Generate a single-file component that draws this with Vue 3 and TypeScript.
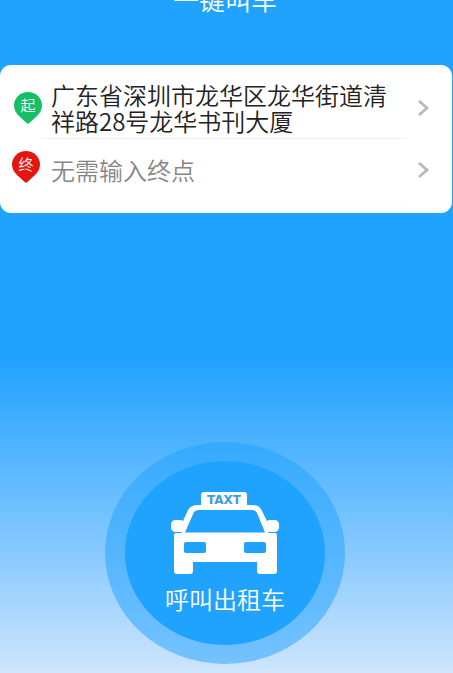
<script setup lang="ts">
interface Stop {
  id: string
  badge: string
  color: string
  text: string
}

const title = '一键叫车'
const stops: Stop[] = [
  { id: 'origin', badge: '起', color: '#14bf66', text: '广东省深圳市龙华区龙华街道清祥路28号龙华书刊大厦' },
  { id: 'destination', badge: '终', color: '#e5150f', text: '无需输入终点' },
]
</script>

<template>
  <main class="page">
    <header class="header">
      <h1 class="title">{{ title }}</h1>
    </header>

    <section class="card">
      <button v-for="stop in stops" :key="stop.id" type="button" class="stop" :class="stop.id">
        <svg class="pin" viewBox="0 0 28 32" aria-hidden="true">
          <path
            d="M14 0C6.2 0 0 6 0 13.5C0 18 2 21 5 24L12.6 31Q14 32.2 15.4 31L23 24C26 21 28 18 28 13.5C28 6 21.8 0 14 0Z"
            :fill="stop.color"
          />
          <text class="pin-text" x="14" y="19" text-anchor="middle">{{ stop.badge }}</text>
        </svg>
        <span class="stop-text">{{ stop.text }}</span>
        <svg class="chevron" viewBox="0 0 12 18" aria-hidden="true">
          <path d="M1 2L9 9L1 16" fill="none" stroke="#b9b9b9" stroke-width="2.800" />
        </svg>
      </button>
    </section>

    <div class="call-area">
      <button type="button" class="call">
        <span class="call-disc">
          <svg class="taxi" viewBox="0 0 110 84" aria-hidden="true">
            <path
              fill="#fff"
              fill-rule="evenodd"
              d="M34 0H74Q77 0 77 3V13H82Q89 13 91.500 18L97 29L99 28H104Q109 28 109 33V35Q109 40 104 40H98L98.500 41H105Q107 41 107 43V79Q107 82 104 82H90Q87 82 87 79V70H23V79Q23 82 20 82H7Q4 82 4 79V43Q4 41 6 41H11.500L12 40H6Q1 40 1 35V33Q1 28 6 28H11L13 29L18 18Q21 13 28 13H31V3Q31 0 34 0ZM29 18Q25 18 23.500 21L15 40.500H95L87 21Q85.500 18 82 18ZM16 50Q14 50 14 52V59Q14 61 16 61H34Q36 61 36 59V52Q36 50 34 50ZM76 50Q74 50 74 52V59Q74 61 76 61H94Q96 61 96 59V52Q96 50 94 50Z"
            />
            <text class="sign" x="54" y="12" text-anchor="middle">TAXT</text>
          </svg>
          <span class="call-label">呼叫出租车</span>
        </span>
      </button>
    </div>
  </main>
</template>

<style>
body {
  margin: 0;
}
</style>

<style scoped>
.page {
  display: flex;
  flex-direction: column;
  box-sizing: border-box;
  min-height: 100vh;
  padding-bottom: 9px;
  overflow: hidden;
  background: linear-gradient(#20a2ff 53%, #43afff 63%, #84c8ff 81%, #cfe5fd 100%);
  font-family: "Noto Sans CJK SC", sans-serif;
}

.header {
  height: 65px;
  overflow: hidden;
}

.title {
  margin: -14px 3px 0 0;
  color: #fff;
  font-size: 26px;
  font-weight: 350;
  line-height: 26px;
  text-align: center;
}

.card {
  margin-right: 1px;
  padding-bottom: 11px;
  border-radius: 11px;
  background: #fff;
}

.stop {
  position: relative;
  display: flex;
  align-items: center;
  box-sizing: border-box;
  width: 100%;
  padding: 0 22px 0 14px;
  border: 0;
  background: none;
  font: inherit;
  font-size: 24px;
  font-weight: 350;
  line-height: 26px;
  text-align: left;
  cursor: pointer;
}

.stop::after {
  content: "";
  position: absolute;
  right: 46px;
  bottom: 0;
  left: 42px;
  height: 1px;
  background: #f1f1f1;
}

.origin {
  min-height: 74px;
  padding-top: 15px;
  padding-bottom: 3px;
  color: #222;
}

.destination {
  min-height: 63px;
  padding-bottom: 2px;
  padding-left: 12px;
  color: #858585;
}

.destination::after {
  background: #fafafa;
}

.pin {
  flex: none;
  width: 28px;
  height: 32px;
}

.destination .pin {
  margin-right: 2px;
  margin-bottom: 6px;
}

.pin-text {
  fill: #fff;
  font-size: 15px;
}

.stop-text {
  flex: 1;
  margin: 0 28px 0 9px;
}

.chevron {
  flex: none;
  width: 12px;
  height: 18px;
}

.call-area {
  display: flex;
  justify-content: center;
  margin-top: auto;
  padding: 24px 3px 0 0;
}

.call {
  padding: 19px 20px;
  border: 0;
  border-radius: 50%;
  background: rgba(32, 162, 255, 0.5);
  color: #fff;
  font: inherit;
  cursor: pointer;
}

.call-disc {
  display: flex;
  flex-direction: column;
  align-items: center;
  gap: 11px;
  box-sizing: border-box;
  width: 200px;
  height: 184px;
  padding-top: 31px;
  border-radius: 50%;
  background: #20a2ff;
}

.taxi {
  width: 110px;
  height: 84px;
}

.sign {
  fill: #3b9bea;
  font-family: "DejaVu Sans", sans-serif;
  font-size: 12px;
  font-weight: 700;
}

.call-label {
  font-size: 24px;
  font-weight: 350;
  line-height: 24px;
}
</style>
